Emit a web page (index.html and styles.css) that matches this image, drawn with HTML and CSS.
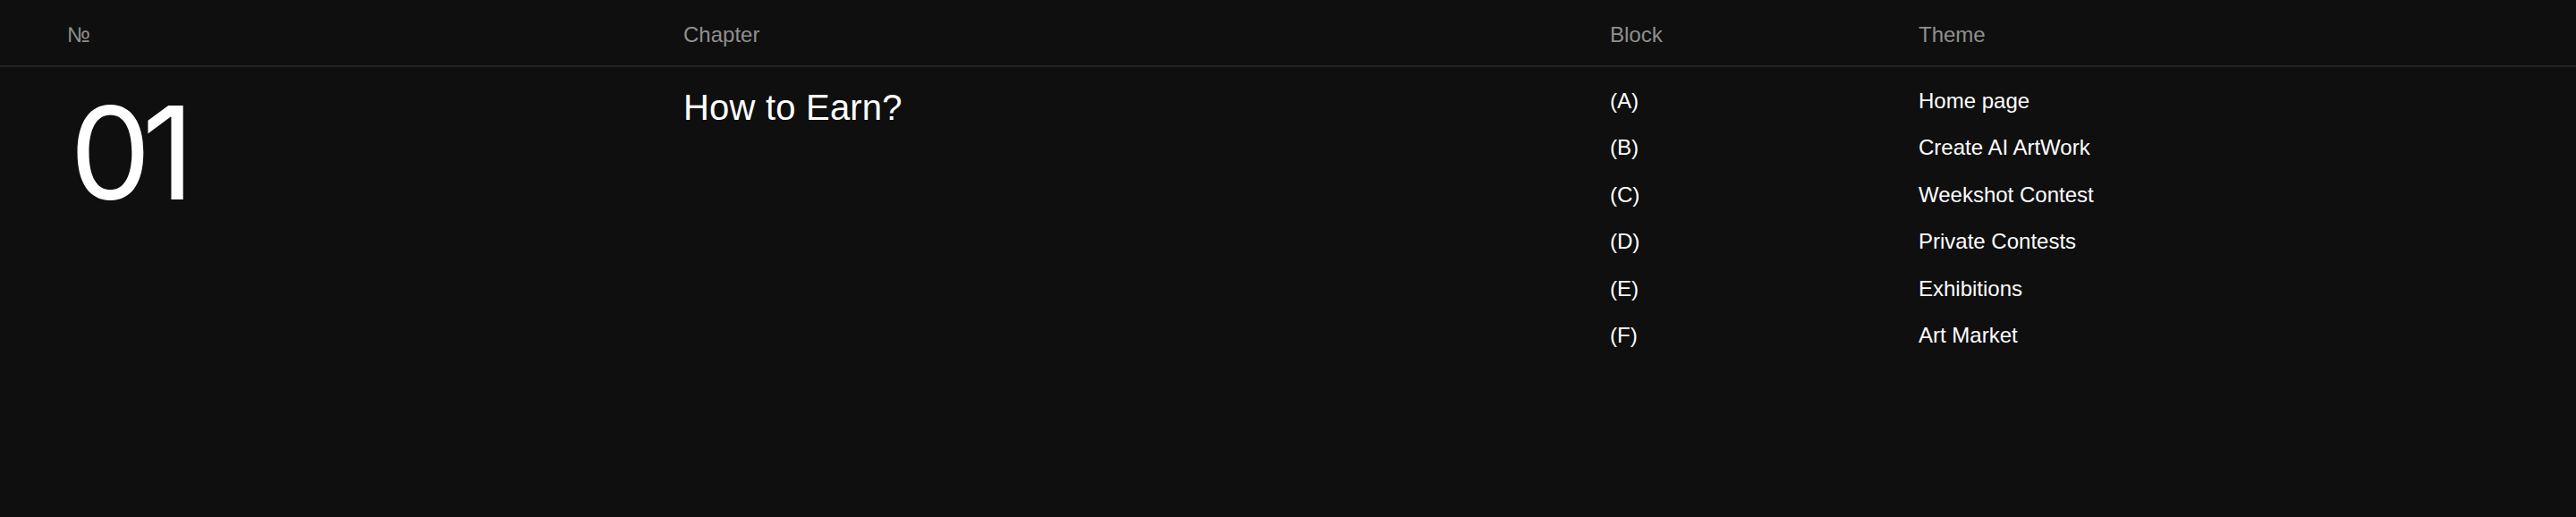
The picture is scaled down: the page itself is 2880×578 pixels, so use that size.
FILE: index.html
```html
<!DOCTYPE html>
<html lang="en">
<head>
<meta charset="utf-8">
<title>Chapters</title>
<link rel="stylesheet" href="styles.css">
</head>
<body>
<div class="table">
  <div class="row head">
    <div class="cell">№</div>
    <div class="cell">Chapter</div>
    <div class="cell">Block</div>
    <div class="cell">Theme</div>
  </div>
  <div class="row body">
    <div class="cell num">01</div>
    <div class="cell title">How to Earn?</div>
    <div class="cell list">
      <div class="item">(A)</div>
      <div class="item">(B)</div>
      <div class="item">(C)</div>
      <div class="item">(D)</div>
      <div class="item">(E)</div>
      <div class="item">(F)</div>
    </div>
    <div class="cell list">
      <div class="item">Home page</div>
      <div class="item">Create AI ArtWork</div>
      <div class="item">Weekshot Contest</div>
      <div class="item">Private Contests</div>
      <div class="item">Exhibitions</div>
      <div class="item">Art Market</div>
    </div>
  </div>
</div>
</body>
</html>
```
FILE: styles.css
```css
html, body {
  margin: 0;
  padding: 0;
  background: #0f0f0f;
}
body {
  width: 2880px;
  height: 578px;
  font-family: "Liberation Sans", Arial, sans-serif;
  color: #ffffff;
}
.row {
  display: grid;
  grid-template-columns: 689px 1036px 345px 1fr;
  padding-left: 75px;
}
.head {
  padding-top: 25px;
  padding-bottom: 20px;
  border-bottom: 2px solid #242424;
  font-size: 24px;
  line-height: 28px;
  color: #8f8f8f;
}
.body {
  padding-top: 12px;
  align-items: start;
}
.num {
  font-family: Inter, "Liberation Sans", sans-serif;
  font-weight: 400;
  font-size: 144px;
  line-height: 144px;
  letter-spacing: -10px;
  margin-top: 12px;
  margin-left: 3px;
}
.title {
  font-size: 40px;
  line-height: 48px;
  letter-spacing: 0.2px;
  margin-top: 9px;
}
.list {
  display: flex;
  flex-direction: column;
}
.item {
  font-size: 24px;
  line-height: 52.4px;
}
```
